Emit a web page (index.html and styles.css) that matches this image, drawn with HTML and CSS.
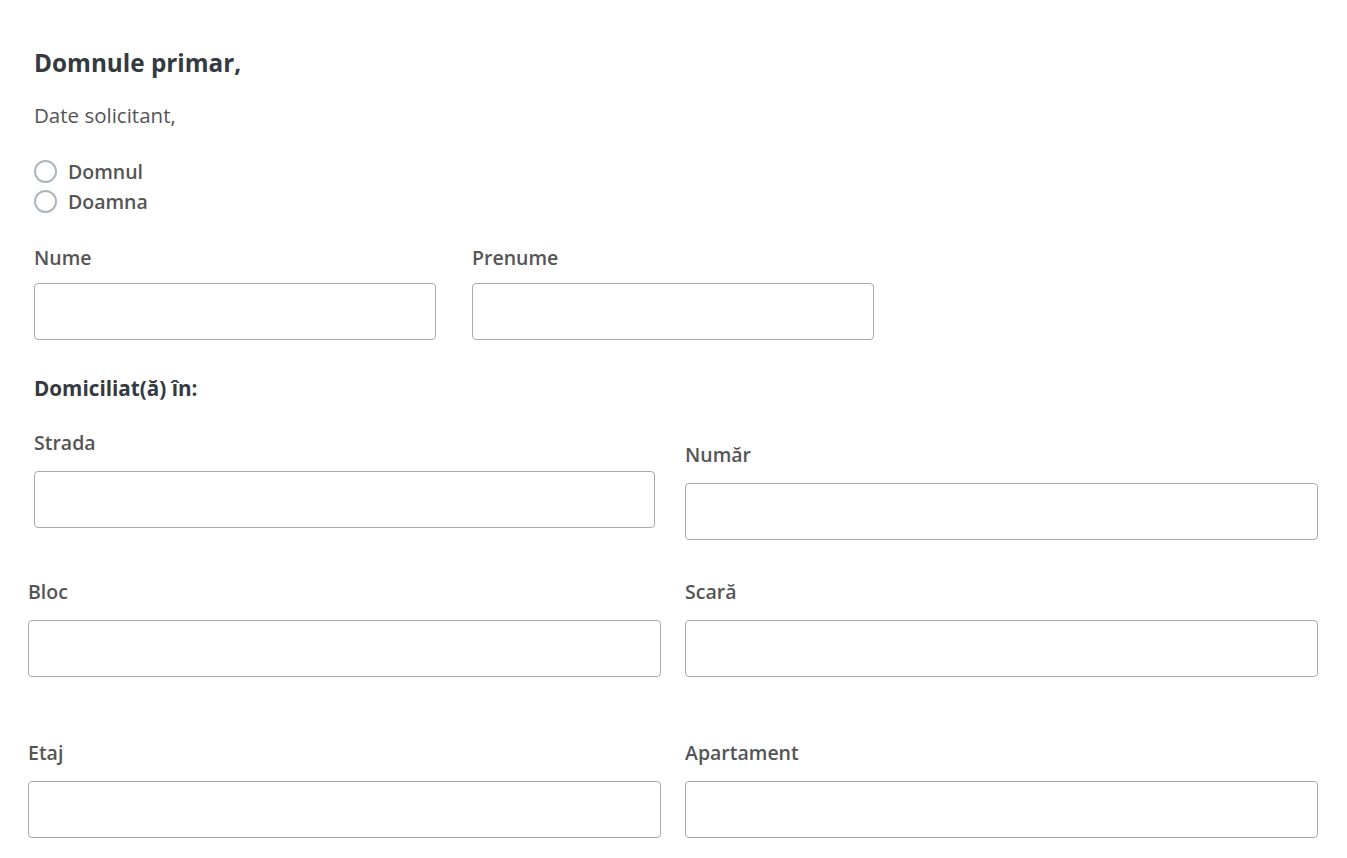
FILE: index.html
```html
<!DOCTYPE html>
<html lang="ro">
<head>
<meta charset="utf-8">
<title>Formular</title>
<link rel="stylesheet" href="styles.css">
</head>
<body>
<main class="form">
  <h1 class="title">Domnule primar,</h1>
  <p class="intro">Date solicitant,</p>
  <div class="radios">
    <label class="radio"><span class="circle"></span>Domnul</label>
    <label class="radio"><span class="circle"></span>Doamna</label>
  </div>

  <div class="row row-name">
    <div class="field"><label class="lbl">Nume</label><input class="inp" type="text"></div>
    <div class="field"><label class="lbl">Prenume</label><input class="inp" type="text"></div>
  </div>

  <h2 class="section">Domiciliat(ă) în:</h2>

  <div class="row row-street">
    <div class="field"><label class="lbl">Strada</label><input class="inp" type="text"></div>
    <div class="field field-low"><label class="lbl">Număr</label><input class="inp" type="text"></div>
  </div>

  <div class="row row-wide row-bloc">
    <div class="field"><label class="lbl">Bloc</label><input class="inp" type="text"></div>
    <div class="field"><label class="lbl">Scară</label><input class="inp" type="text"></div>
  </div>

  <div class="row row-wide row-etaj">
    <div class="field"><label class="lbl">Etaj</label><input class="inp" type="text"></div>
    <div class="field"><label class="lbl">Apartament</label><input class="inp" type="text"></div>
  </div>
</main>
</body>
</html>
```
FILE: styles.css
```css
* { box-sizing: border-box; }
html, body { margin: 0; padding: 0; background: #fff; }
body {
  font-family: "Open Sans", "Lato", "Liberation Sans", sans-serif;
  color: #555;
}
.form { padding: 0 0 0 34px; }
.title {
  margin: 48px 0 0;
  font-size: 24.3px;
  line-height: 29px;
  font-weight: 700;
  color: #343a40;
}
.intro {
  margin: 26px 0 0;
  font-size: 20.5px;
  line-height: 24px;
  font-weight: 500;
  color: #555;
}
.radios { margin-top: 29px; display: flex; flex-direction: column; }
.radio {
  display: flex;
  align-items: center;
  height: 30px;
  font-size: 19.5px;
  font-weight: 600;
  color: #555;
}
.circle {
  width: 23px; height: 23px;
  border: 2px solid #adb5bd;
  border-radius: 50%;
  margin-right: 11px;
  flex: none;
}
.row { display: flex; align-items: flex-start; }
.field { display: flex; flex-direction: column; }
.lbl {
  display: block;
  font-size: 19.5px;
  line-height: 24px;
  font-weight: 600;
  color: #555;
  margin-bottom: 16px;
}
.inp {
  display: block;
  height: 57px;
  border: 1px solid #a9a9a9;
  border-radius: 4px;
  background: #fff;
  font: inherit;
  padding: 0 12px;
}
.row-name { margin-top: 30px; gap: 36px; }
.row-name .field { width: 402px; }
.row-name .lbl { margin-bottom: 13px; }
.section {
  margin: 36px 0 0;
  font-size: 20.7px;
  line-height: 24px;
  font-weight: 700;
  color: #343a40;
}
.row-street { margin-top: 31px; gap: 30px; }
.row-street .field:first-child { width: 621px; }
.row-street .field:last-child { width: 633px; }
.field-low { margin-top: 12px; }
.row-wide { margin-left: -6px; gap: 24px; }
.row-wide .field { width: 633px; }
.row-bloc { margin-top: 40px; }
.row-etaj { margin-top: 64px; }
```
